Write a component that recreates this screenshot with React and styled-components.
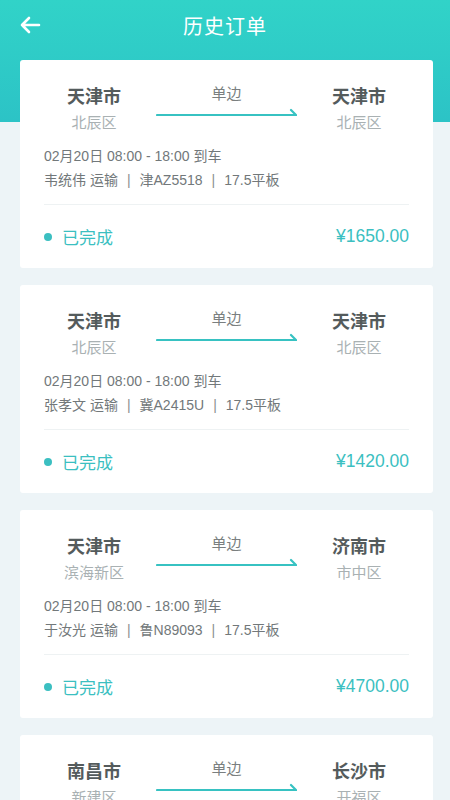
import React from 'react';
import styled, { createGlobalStyle } from 'styled-components';

const GlobalStyle = createGlobalStyle`
	html, body {
		margin: 0;
		padding: 0;
	}
	body {
		font-family: "Liberation Sans", "Noto Sans CJK SC", sans-serif;
		background: #edf4f7;
	}
`;

const orders = [
	{ from: '天津市', fromArea: '北辰区', to: '天津市', toArea: '北辰区', driver: '韦统伟', plate: '津AZ5518', price: '1650.00' },
	{ from: '天津市', fromArea: '北辰区', to: '天津市', toArea: '北辰区', driver: '张孝文', plate: '冀A2415U', price: '1420.00' },
	{ from: '天津市', fromArea: '滨海新区', to: '济南市', toArea: '市中区', driver: '于汝光', plate: '鲁N89093', price: '4700.00' },
	{ from: '南昌市', fromArea: '新建区', to: '长沙市', toArea: '开福区', driver: '李国强', plate: '赣A3307K', price: '2300.00' },
];

const BackIcon = () => (
	<svg width="22" height="18" viewBox="0 0 22 18" fill="none" stroke="#fff" strokeWidth="2.6" strokeLinecap="round" strokeLinejoin="round">
		<path d="M20 9H3M10 2L3 9l7 7" />
	</svg>
);

const RouteLine = () => (
	<svg width="100%" height="10" viewBox="0 0 141 10" preserveAspectRatio="none" fill="none" stroke="#37c2c2" strokeWidth="2.2" strokeLinecap="round">
		<path d="M1 8H140L135 3" />
	</svg>
);

function OrderCard({ order }) {
	return (
		<Card>
			<Route>
				<Place>
					<City>{order.from}</City>
					<Area>{order.fromArea}</Area>
				</Place>
				<Trip>
					<TripType>单边</TripType>
					<RouteLine />
				</Trip>
				<Place>
					<City>{order.to}</City>
					<Area>{order.toArea}</Area>
				</Place>
			</Route>
			<Info>
				<InfoLine>02月20日 08:00 - 18:00 到车</InfoLine>
				<InfoLine>{order.driver} 运输<Sep>|</Sep>{order.plate}<Sep>|</Sep>17.5平板</InfoLine>
			</Info>
			<Footer>
				<Status>已完成</Status>
				<Price>¥{order.price}</Price>
			</Footer>
		</Card>
	);
}

export default function App() {
	return (
		<Page>
			<GlobalStyle />
			<Header>
				<Back><BackIcon /></Back>
				<Title>历史订单</Title>
			</Header>
			<List>
				{orders.map((o, i) => <OrderCard key={i} order={o} />)}
			</List>
		</Page>
	);
}

const Page = styled.div`
	height: 800px;
	overflow: hidden;
	background: linear-gradient(#31d3c8, #2cc3c6) 0 0 / 100% 122px no-repeat, #edf4f7;
`;

const Header = styled.div`
	height: 50px;
	display: flex;
	align-items: center;
	justify-content: center;
	position: relative;
`;

const Back = styled.div`
	position: absolute;
	left: 19px;
	top: 16px;
	display: flex;
`;

const Title = styled.h1`
	margin: 0;
	color: #fff;
	font-size: 20px;
	font-weight: 400;
	letter-spacing: 1px;
	font-family: "Noto Sans CJK SC", sans-serif;
`;

const List = styled.div`
	display: flex;
	flex-direction: column;
	gap: 17px;
	padding: 10px 17px 0 20px;
`;

const Card = styled.div`
	background: #fff;
	border-radius: 3px;
	height: 208px;
	box-sizing: border-box;
	padding: 23px 24px 0 24px;
	display: flex;
	flex-direction: column;
	flex-shrink: 0;
`;

const Route = styled.div`
	display: grid;
	grid-template-columns: 100px 1fr 100px;
	column-gap: 12px;
`;

const Place = styled.div`
	display: flex;
	flex-direction: column;
	align-items: center;
`;

const City = styled.div`
	font-family: "Noto Sans CJK SC", sans-serif;
	font-size: 18px;
	font-weight: 700;
	line-height: 24px;
	color: #545b5c;
`;

const Area = styled.div`
	font-family: "Noto Sans CJK SC", sans-serif;
	font-size: 15px;
	line-height: 24px;
	margin-top: 3px;
	color: #a9b1b3;
`;

const Trip = styled.div`
	display: flex;
	flex-direction: column;
	align-items: center;
	gap: 4px;
`;

const TripType = styled.div`
	font-family: "Noto Sans CJK SC", sans-serif;
	font-size: 15px;
	line-height: 20px;
	color: #7a7f80;
`;

const Info = styled.div`
	margin-top: 10px;
	padding-bottom: 12px;
	border-bottom: 1px solid #eef2f3;
`;

const InfoLine = styled.div`
	font-size: 14px;
	line-height: 24px;
	color: #72787a;
	white-space: pre;
`;

const Sep = styled.span`
	margin: 0 9px;
	color: #8a8f90;
`;

const Footer = styled.div`
	flex: 1;
	display: flex;
	align-items: center;
	justify-content: space-between;
`;

const Status = styled.div`
	display: flex;
	align-items: center;
	gap: 10px;
	font-family: "Noto Sans CJK SC", sans-serif;
	font-size: 17px;
	color: #3bbfc1;
	&::before {
		content: '';
		width: 8px;
		height: 8px;
		border-radius: 50%;
		background: #3bbfc1;
	}
`;

const Price = styled.div`
	font-size: 17.5px;
	color: #3bbfc1;
`;
